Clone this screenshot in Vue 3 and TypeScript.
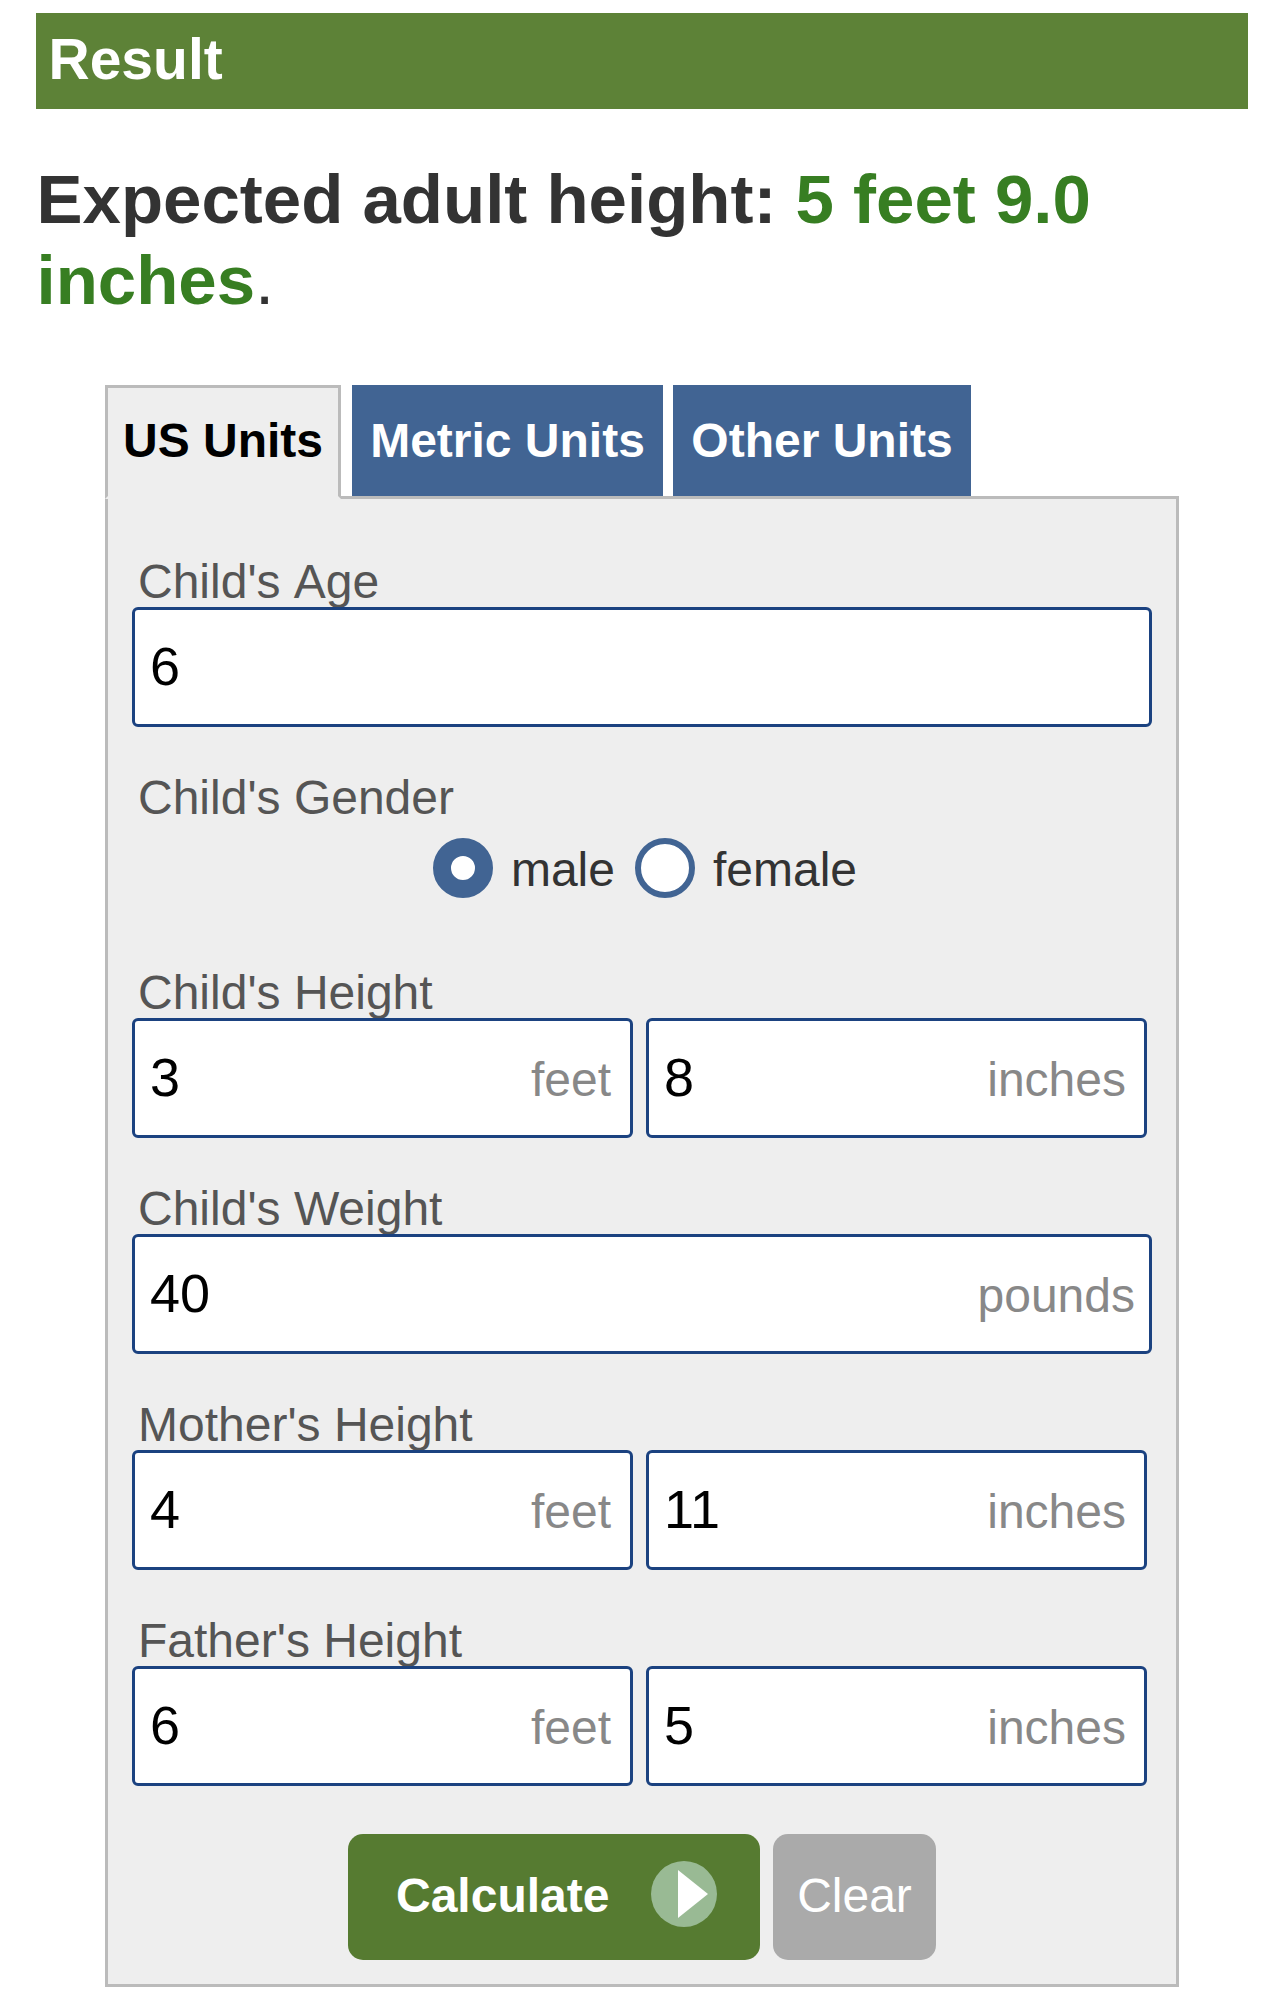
<script setup lang="ts">
import { ref } from 'vue'

interface Entry {
  value: string
  unit?: string
}

interface Field {
  label: string
  entries: Entry[]
}

const tabs = ['US Units', 'Metric Units', 'Other Units']
const activeTab = ref(0)
const gender = ref<'male' | 'female'>('male')
const genders = ['male', 'female'] as const

const age = ref<Field>({ label: "Child's Age", entries: [{ value: '6' }] })
const measures = ref<Field[]>([
  { label: "Child's Height", entries: [{ value: '3', unit: 'feet' }, { value: '8', unit: 'inches' }] },
  { label: "Child's Weight", entries: [{ value: '40', unit: 'pounds' }] },
  { label: "Mother's Height", entries: [{ value: '4', unit: 'feet' }, { value: '11', unit: 'inches' }] },
  { label: "Father's Height", entries: [{ value: '6', unit: 'feet' }, { value: '5', unit: 'inches' }] },
])

function clearAll() {
  for (const field of [age.value, ...measures.value]) {
    for (const entry of field.entries) entry.value = ''
  }
}
</script>

<template>
  <main class="page">
    <h2 class="banner">Result</h2>
    <p class="result"><b>Expected adult height: </b><b class="answer">5 feet 9.0 inches</b>.</p>

    <section class="calculator">
      <nav class="tabs">
        <button
          v-for="(tab, i) in tabs"
          :key="tab"
          type="button"
          class="tab"
          :class="{ active: i === activeTab }"
          @click="activeTab = i"
        >{{ tab }}</button>
      </nav>

      <form class="panel" @submit.prevent>
        <div class="field">
          <label class="label age">{{ age.label }}</label>
          <div class="entries">
            <div class="box wide"><input v-model="age.entries[0].value" class="value" type="text" /></div>
          </div>
        </div>

        <div class="gender">
          <div class="label">Child's Gender</div>
          <div class="radios">
            <label v-for="g in genders" :key="g" class="option">
              <input v-model="gender" class="radio" type="radio" name="gender" :value="g" />
              <span>{{ g }}</span>
            </label>
          </div>
        </div>

        <div v-for="field in measures" :key="field.label" class="field">
          <label class="label">{{ field.label }}</label>
          <div class="entries">
            <div
              v-for="entry in field.entries"
              :key="entry.unit"
              class="box"
              :class="{ wide: field.entries.length === 1, feet: entry.unit === 'feet' }"
            >
              <input v-model="entry.value" class="value" type="text" />
              <span class="unit">{{ entry.unit }}</span>
            </div>
          </div>
        </div>

        <div class="actions">
          <button type="submit" class="calculate">
            <span>Calculate</span>
            <svg class="play" viewBox="0 0 66 66" aria-hidden="true">
              <circle cx="33" cy="33" r="33" fill="#99ba94" />
              <path d="M27 9L57 33L27 57Z" fill="#fff" />
            </svg>
          </button>
          <button type="button" class="clear" @click="clearAll">Clear</button>
        </div>
      </form>
    </section>
  </main>
</template>

<style>
body {
  background: #fff;
}
</style>

<style scoped>
.page {
  box-sizing: border-box;
  width: 1284px;
  height: 2008px;
  padding: 13px 36px 0;
  overflow: hidden;
  background: #fff;
  color: #333;
  font-family: 'Liberation Sans', Arial, sans-serif;
  font-size: 48px;
}

.page *,
.page *::before {
  box-sizing: border-box;
}

.banner {
  height: 96px;
  margin: 0;
  padding-left: 12.5px;
  background: #5d8237;
  color: #fff;
  font-size: 57px;
  line-height: 92px;
}

.result {
  margin: 50px 0 0;
  padding-left: 0.5px;
  font-size: 69px;
  line-height: 81px;
}

.answer {
  color: #377e22;
}

.calculator {
  width: 1074px;
  margin: 64px 0 0 69px;
}

.tabs {
  display: flex;
  height: 111px;
}

.tab {
  height: 111px;
  margin: 0 10px 0 0;
  padding: 0;
  width: 298px;
  border: 0;
  background: #416493;
  color: #fff;
  font: bold 48px/111px 'Liberation Sans', Arial, sans-serif;
  white-space: nowrap;
}

.tab:nth-child(2) {
  width: 311px;
}

/* The active tab overlaps the panel's top edge and hides it. */
.tab.active {
  position: relative;
  z-index: 1;
  width: 236px;
  height: 114px;
  margin-right: 11px;
  padding-bottom: 3px;
  border: 3px solid #bbb;
  border-bottom-color: #eee;
  background: #eee;
  color: #000;
  line-height: 105px;
}

.panel {
  height: 1491px;
  padding: 52px 24px 0;
  border: 3px solid #bbb;
  background: #eee;
}

.label {
  display: block;
  height: 56px;
  padding-left: 6px;
  color: #555;
  line-height: 62px;
}

.label.age {
  word-spacing: 2.6px;
}

.field {
  height: 216px;
}

.entries {
  display: flex;
  gap: 13px;
}

.box {
  position: relative;
  z-index: 1;
  display: flex;
  align-items: center;
  width: 501px;
  height: 120px;
  padding: 0 18px 0 15px;
  border: 3px solid #1b4280;
  border-radius: 6px;
  background: #fff;
}

.box.feet {
  padding-right: 19px;
}

.box.wide {
  width: 1020px;
  padding-right: 14px;
}

.value {
  flex: 1;
  min-width: 0;
  width: 0;
  height: 62px;
  margin: 0 0 2px;
  padding: 0;
  border: 0;
  outline: 0;
  background: transparent;
  color: #000;
  font: 54px/62px 'Liberation Sans', Arial, sans-serif;
}

.unit {
  margin-top: 3px;
  color: #888;
  line-height: 56px;
}

.gender {
  height: 195px;
}

.radios {
  display: flex;
  justify-content: center;
  gap: 20px;
  padding: 15px 0 0 6px;
}

.option {
  display: flex;
  align-items: center;
  gap: 18px;
  height: 60px;
  line-height: 60px;
}

.option span {
  margin-top: 3px;
}

.radio {
  flex: none;
  width: 60px;
  height: 60px;
  margin: 0;
  appearance: none;
  border: 6px solid #416493;
  border-radius: 50%;
  background: #fff;
}

.radio:checked {
  border-width: 18px;
}

.actions {
  display: flex;
  justify-content: center;
  gap: 13px;
  padding-top: 8px;
}

.calculate,
.clear {
  height: 126px;
  margin: 0;
  padding: 0 0 2px;
  border: 0;
  border-radius: 15px;
  color: #fff;
  font: 48px/122px 'Liberation Sans', Arial, sans-serif;
}

.calculate {
  display: flex;
  align-items: center;
  justify-content: space-between;
  width: 412px;
  padding: 0 43px 2px 48px;
  background: #567b31;
  font-weight: bold;
}

.play {
  width: 66px;
  height: 66px;
  margin-bottom: 4px;
}

.clear {
  width: 163px;
  background: #aaa;
}
</style>
